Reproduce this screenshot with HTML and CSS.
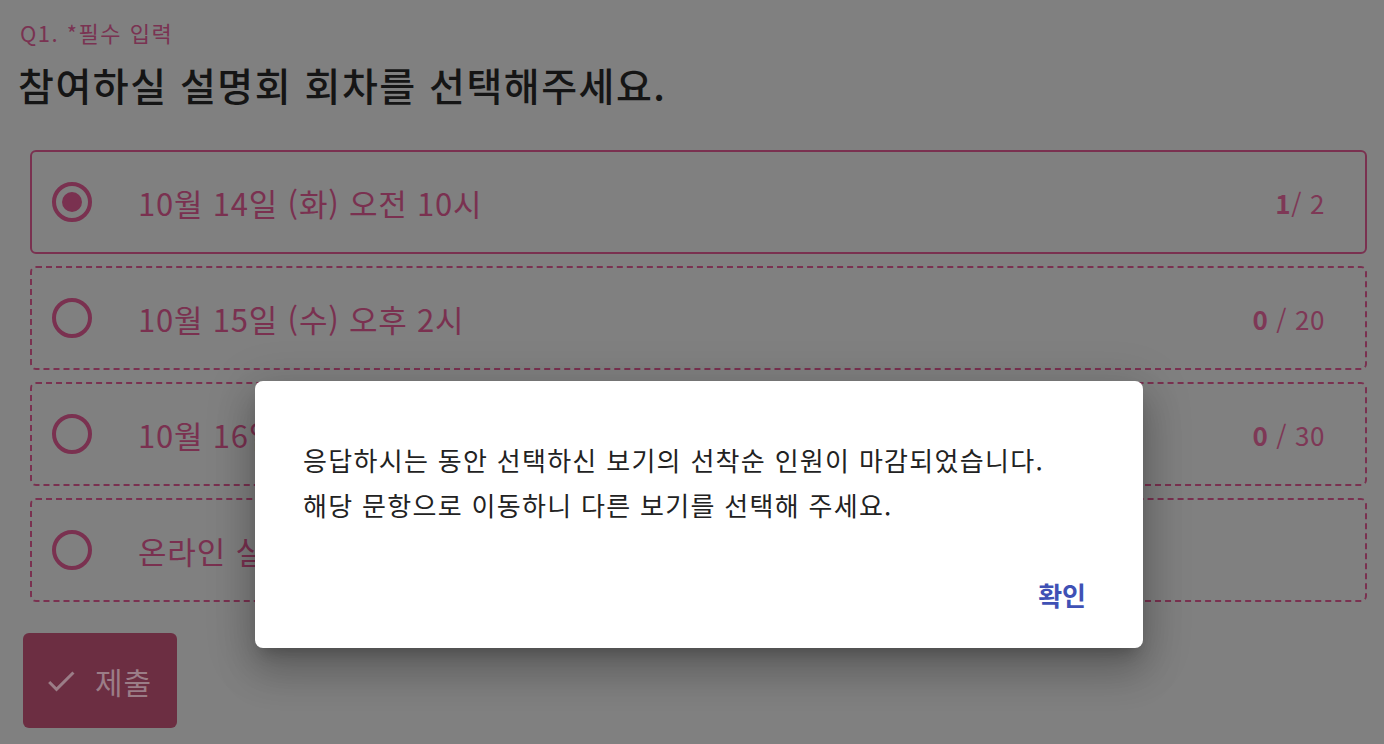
FILE: index.html
```html
<!DOCTYPE html>
<html lang="ko">
<head>
<meta charset="utf-8">
<title>설명회 회차 선택</title>
<link rel="stylesheet" href="styles.css">
</head>
<body>
<main class="page">
  <div class="q-label">Q1. *필수 입력</div>
  <h1 class="q-title">참여하실 설명회 회차를 선택해주세요.</h1>
  <div class="options">
    <div class="option selected">
      <span class="radio"><span class="dot"></span></span>
      <span class="opt-text">10월 14일 (화) 오전 10시</span>
      <span class="count"><b>1</b>/ 2</span>
    </div>
    <div class="option">
      <span class="radio"></span>
      <span class="opt-text">10월 15일 (수) 오후 2시</span>
      <span class="count"><b>0</b> / 20</span>
    </div>
    <div class="option">
      <span class="radio"></span>
      <span class="opt-text">10월 16일 (목) 오후 7시</span>
      <span class="count"><b>0</b> / 30</span>
    </div>
    <div class="option">
      <span class="radio"></span>
      <span class="opt-text">온라인 실시간 설명회</span>
      <span class="count"></span>
    </div>
  </div>
  <button class="submit" type="button">
    <svg class="check" viewBox="0 0 24 24" width="36" height="36"><path d="M9 16.17L4.83 12l-1.42 1.41L9 19 21 7l-1.41-1.41z"/></svg>
    <span>제출</span>
  </button>
</main>
<div class="dialog" role="dialog">
  <div class="dialog-text">
    <p>응답하시는 동안 선택하신 보기의 선착순 인원이 마감되었습니다.</p>
    <p>해당 문항으로 이동하니 다른 보기를 선택해 주세요.</p>
  </div>
  <div class="dialog-actions">
    <button class="confirm" type="button">확인</button>
  </div>
</div>
</body>
</html>
```

FILE: styles.css
```css
html, body {
  margin: 0;
  padding: 0;
  height: 100%;
}
body {
  background: #808080;
  font-family: "Noto Sans CJK KR", "Noto Sans", sans-serif;
  overflow: hidden;
  position: relative;
}
.page {
  padding: 17px 0 0 20px;
}
.q-label {
  font-size: 22px;
  line-height: 30px;
  letter-spacing: 1.5px;
  color: #7a3352;
}
.q-title {
  margin: 12px 0 0 -2px;
  font-size: 39px;
  line-height: 50px;
  letter-spacing: 1.5px;
  font-weight: 500;
  color: #151515;
}
.options {
  margin: 41px 17px 0 10px;
  display: flex;
  flex-direction: column;
  gap: 12px;
}
.option {
  height: 104px;
  box-sizing: border-box;
  border: 2px dashed #7a3150;
  border-radius: 6px;
  display: flex;
  align-items: center;
  padding: 0 40px 0 20px;
  color: #7a3150;
}
.option.selected {
  border-style: solid;
}
.radio {
  width: 40px;
  height: 40px;
  box-sizing: border-box;
  border: 4px solid #7a3150;
  border-radius: 50%;
  display: flex;
  align-items: center;
  justify-content: center;
  flex: none;
}
.dot {
  width: 20px;
  height: 20px;
  border-radius: 50%;
  background: #7a3150;
}
.opt-text {
  margin-left: 46px;
  font-size: 31px;
  letter-spacing: 0.8px;
  flex: 1;
}
.count {
  font-size: 26px;
  letter-spacing: 0.6px;
  color: #7e3856;
}
.count b {
  font-weight: 700;
}
.submit {
  margin: 31px 0 0 3px;
  width: 154px;
  height: 95px;
  border: none;
  border-radius: 6px;
  background: #6c2e42;
  color: #9b7d87;
  display: flex;
  align-items: center;
  gap: 16px;
  padding: 0 0 0 20px;
  font-family: inherit;
  font-size: 30px;
  letter-spacing: 1px;
}
.check {
  fill: #9b7d87;
}
.dialog {
  position: absolute;
  left: 255px;
  top: 381px;
  width: 888px;
  height: 267px;
  box-sizing: border-box;
  background: #fff;
  border-radius: 8px;
  padding: 56px 48px 0;
  display: flex;
  flex-direction: column;
  box-shadow: 0 11px 15px -7px rgba(0,0,0,.22), 0 24px 38px 3px rgba(0,0,0,.16), 0 9px 46px 8px rgba(0,0,0,.14);
}
.dialog-text {
  font-size: 26px;
  line-height: 45px;
  letter-spacing: 1.3px;
  color: #222;
}
.dialog-text p {
  margin: 0;
}
.dialog-actions {
  margin-top: auto;
  display: flex;
  justify-content: flex-end;
  padding: 0 9px 38px 0;
}
.confirm {
  border: none;
  background: none;
  padding: 0;
  font-family: inherit;
  font-size: 26px;
  line-height: 30px;
  font-weight: 700;
  color: #3f51b5;
}
```
